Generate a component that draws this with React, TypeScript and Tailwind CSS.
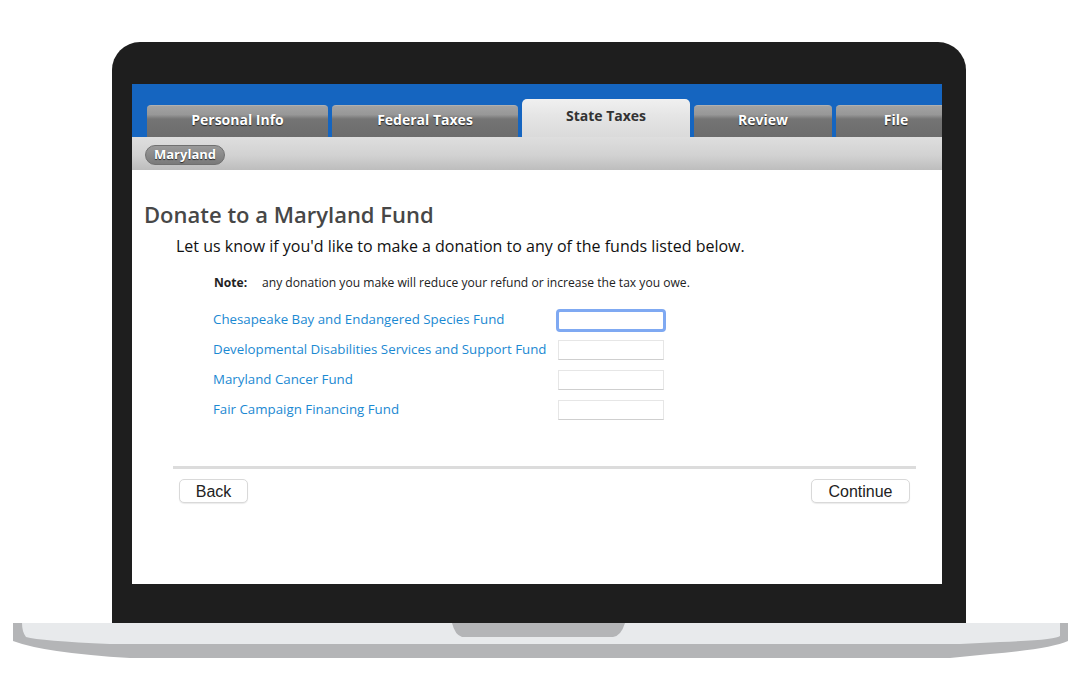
import React from 'react';

const tabs = [
  { label: 'Personal Info', w: 'w-[181px]' },
  { label: 'Federal Taxes', w: 'w-[186px]' },
  { label: 'State Taxes', w: 'w-[168px]', active: true },
  { label: 'Review', w: 'w-[138px]' },
  { label: 'File', w: 'w-[120px]' },
];

const funds = [
  'Chesapeake Bay and Endangered Species Fund',
  'Developmental Disabilities Services and Support Fund',
  'Maryland Cancer Fund',
  'Fair Campaign Financing Fund',
];

const LaptopBase: React.FC = () => (
  <svg width="1080" height="77" viewBox="0 623 1080 77" className="block">
    <path d="M13,623 L1068,623 L1068,641 Q1050,649 990,654 L950,658 L130,658 Q45,653 13,641 Z" fill="#b4b5b7" />
    <path d="M22,623 L1060,623 L1060,636 Q1056,640 1000,642 L960,644 L110,644 Q40,641 26,637 Q22,632 22,623 Z" fill="#e8eaec" />
    <path d="M452,623 L625,623 Q621,636 613,637 L462,637 Q455,635 452,623 Z" fill="#b4b5b7" />
  </svg>
);

export default function App() {
  return (
    <div className="w-[1080px] h-[700px] bg-white overflow-hidden pt-[42px]" style={{ fontFamily: '"Open Sans", "DejaVu Sans", sans-serif' }}>
      {/* Lid */}
      <div className="ml-[112px] w-[854px] h-[581px] bg-[#1e1e1e] rounded-t-[28px] pt-[42px] pl-[20px]">
        <div className="w-[810px] h-[500px] bg-white overflow-hidden flex flex-col">
          {/* Tab bar */}
          <div className="h-[53px] bg-[#1565c0] flex items-end gap-[4px] pl-[15px] shrink-0">
            {tabs.map((t) =>
              t.active ? (
                <div
                  key={t.label}
                  className={`${t.w} h-[38px] shrink-0 rounded-t-[5px] bg-[linear-gradient(to_bottom,#f0f0f0_0%,#e6e6e6_40%,#dadada_100%)] flex items-center justify-center pb-[6px] text-[14px] font-bold text-[#333]`}
                >
                  {t.label}
                </div>
              ) : (
                <div
                  key={t.label}
                  className={`${t.w} h-[32px] shrink-0 rounded-t-[4px] border-t border-[#b0b0b0] bg-[linear-gradient(to_bottom,#a2a2a2_0%,#979797_28%,#747474_42%,#6c6c6c_100%)] flex items-center justify-center pb-[4px] text-[14px] font-bold text-white [text-shadow:0_1px_1px_rgba(0,0,0,0.7)]`}
                >
                  {t.label}
                </div>
              )
            )}
          </div>

          {/* Sub bar */}
          <div className="h-[33px] shrink-0 bg-[linear-gradient(to_bottom,#dedede_0%,#d2d2d2_55%,#bdbdbd_100%)] flex items-center pl-[13px] pt-[3px]">
            <div className="h-[20px] px-[8px] rounded-full border border-[#707070] bg-[linear-gradient(to_bottom,#9a9a9a,#7a7a7a)] flex items-center text-[13px] font-bold text-white [text-shadow:0_1px_1px_rgba(0,0,0,0.7)]">
              Maryland
            </div>
          </div>

          {/* Content */}
          <div className="flex-1 flex flex-col pt-[30px]">
            <h1 className="pl-[12px] text-[22px] font-semibold text-[#474747] leading-[28px]">
              Donate to a Maryland Fund
            </h1>
            <p className="pl-[44px] mt-[7px] text-[16px] text-[#111] leading-[22px]">
              Let us know if you'd like to make a donation to any of the funds listed below.
            </p>
            <div className="pl-[82px] mt-[18px] flex items-center text-[12.1px] text-[#222] leading-[16px]">
              <span className="font-bold w-[48px]">Note:</span>
              <span>any donation you make will reduce your refund or increase the tax you owe.</span>
            </div>

            <div className="pl-[81px] mt-[19px] flex flex-col gap-[10px]">
              {funds.map((f, i) => (
                <div key={f} className="flex items-center h-[20px]">
                  <span className="w-[345px] text-[13.3px] text-[#1b89d2]">{f}</span>
                  {i === 0 ? (
                    <div className="w-[110px] h-[23px] -ml-[2px] rounded-[4px] border-[3px] border-[#7fa9f2] bg-white" />
                  ) : (
                    <div className="w-[106px] h-[20px] border border-[#e6e6e6] border-b-[#cfcfcf] bg-white" />
                  )}
                </div>
              ))}
            </div>

            <div className="ml-[41px] mr-[26px] mt-[46px] h-[3px] bg-[#dcdcdc]" />

            <div className="ml-[47px] mr-[32px] mt-[10px] flex justify-between" style={{ fontFamily: '"Liberation Sans", Arial, sans-serif' }}>
              <button className="w-[69px] h-[24px] rounded-[5px] border border-[#d9d9d9] bg-white shadow-[0_1px_1px_rgba(0,0,0,0.08)] text-[16px] text-[#222]">
                Back
              </button>
              <button className="w-[99px] h-[24px] rounded-[5px] border border-[#d9d9d9] bg-white shadow-[0_1px_1px_rgba(0,0,0,0.08)] text-[16px] text-[#222]">
                Continue
              </button>
            </div>
          </div>
        </div>
      </div>
      <LaptopBase />
    </div>
  );
}
